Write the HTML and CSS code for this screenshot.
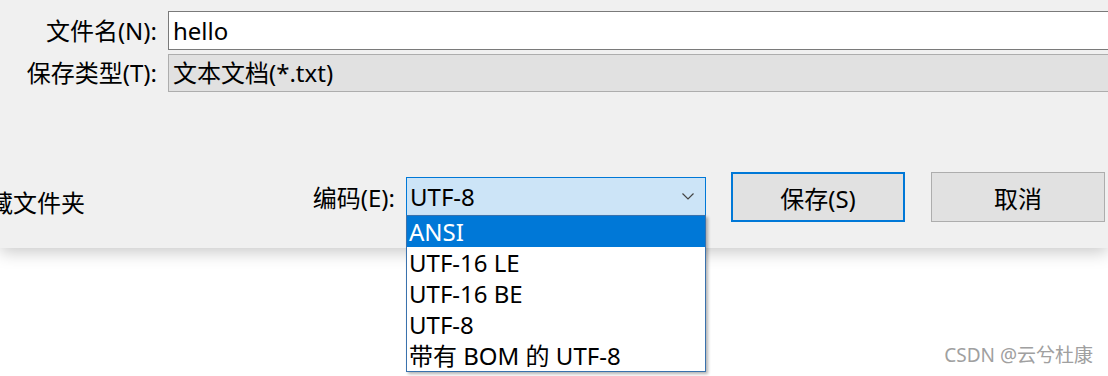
FILE: index.html
```html
<!DOCTYPE html>
<html lang="zh-CN">
<head>
    <meta charset="UTF-8">
    <title>另存为</title>
    <link rel="stylesheet" href="styles.css">
</head>
<body>
    <div class="dialog">
        <div class="fields">
            <label class="field-label">文件名(N):</label>
            <div class="field field-input">hello</div>
            <label class="field-label">保存类型(T):</label>
            <div class="field field-static">文本文档(*.txt)</div>
        </div>
        <div class="footer">
            <span class="hidden-folders">隐藏文件夹</span>
            <div class="encoding">
                <span class="encoding-label">编码(E):</span>
                <div class="combo">
                    <span>UTF-8</span>
                    <svg class="chevron" width="12" height="7" viewBox="0 0 12 7">
                        <polyline points="0.5,0.5 6,6 11.5,0.5" fill="none" stroke="#444" stroke-width="1.2"/>
                    </svg>
                    <ul class="combo-list">
                        <li class="selected">ANSI</li>
                        <li>UTF-16 LE</li>
                        <li>UTF-16 BE</li>
                        <li>UTF-8</li>
                        <li>带有 BOM 的 UTF-8</li>
                    </ul>
                </div>
            </div>
            <button class="btn btn-primary">保存(S)</button>
            <button class="btn btn-cancel">取消</button>
        </div>
    </div>
    <div class="watermark">CSDN @云兮杜康</div>
</body>
</html>
```

FILE: styles.css
```css
* {
    margin: 0;
    padding: 0;
    box-sizing: border-box;
}
html, body {
    height: 100%;
}
body {
    position: relative;
    background-color: #fff;
    font-family: "Noto Sans", "Noto Sans CJK SC", sans-serif;
    font-size: 24px;
    color: #000;
}
.dialog {
    height: 248px;
    padding-top: 11px;
    background-color: #f0f0f0;
    box-shadow: 0 4px 16px rgba(0, 0, 0, 0.22);
}
.fields {
    display: grid;
    grid-template-columns: 157px 1fr;
    grid-template-rows: 39px 38px;
    column-gap: 11px;
    row-gap: 4px;
    overflow: hidden;
}
.field-label {
    text-align: right;
    align-self: center;
    line-height: 1;
    white-space: nowrap;
}
.field {
    display: flex;
    align-items: center;
    padding-left: 4px;
    margin-right: -6px;
    line-height: 1;
}
.field-input {
    background-color: #fff;
    border: 1px solid #7a7a7a;
}
.field-static {
    background-color: #e1e1e1;
    border: 1px solid #adadad;
}

.footer {
    display: flex;
    align-items: center;
    height: 50px;
    margin-top: 80px;
    padding-right: 3px;
}
.hidden-folders {
    margin-left: -35px;
    margin-top: 9px;
    white-space: nowrap;
}
.encoding {
    display: flex;
    align-items: center;
    margin-left: auto;
}
.encoding-label {
    margin-right: 11px;
    margin-top: -2px;
}
.combo {
    position: relative;
    display: flex;
    align-items: center;
    justify-content: space-between;
    width: 300px;
    height: 39px;
    padding: 0 11px 0 3px;
    margin-top: -1px;
    background-color: #cce4f7;
    border: 1px solid #0078d7;
    line-height: 1;
}
.chevron {
    display: block;
}
.combo-list {
    list-style: none;
    position: absolute;
    top: 37px;
    left: -1px;
    width: 300px;
    background-color: #fff;
    border: 1px solid #3a72ad;
    box-shadow: 2px 2px 3px rgba(0, 0, 0, 0.3);
    z-index: 2;
}
.combo-list li {
    height: 31px;
    line-height: 31px;
    padding-left: 2px;
    white-space: nowrap;
}
.combo-list li.selected {
    background-color: #0078d7;
    color: #fff;
}

.btn {
    width: 174px;
    height: 50px;
    font-family: inherit;
    font-size: 24px;
    color: #000;
    background-color: #e1e1e1;
    border: 1px solid #adadad;
}
.btn-primary {
    margin-left: 25px;
    border: 2px solid #0078d7;
}
.btn-cancel {
    margin-left: 26px;
}

.watermark {
    position: absolute;
    right: 15px;
    bottom: 8px;
    font-size: 19px;
    color: #a0a0a0;
}
```
